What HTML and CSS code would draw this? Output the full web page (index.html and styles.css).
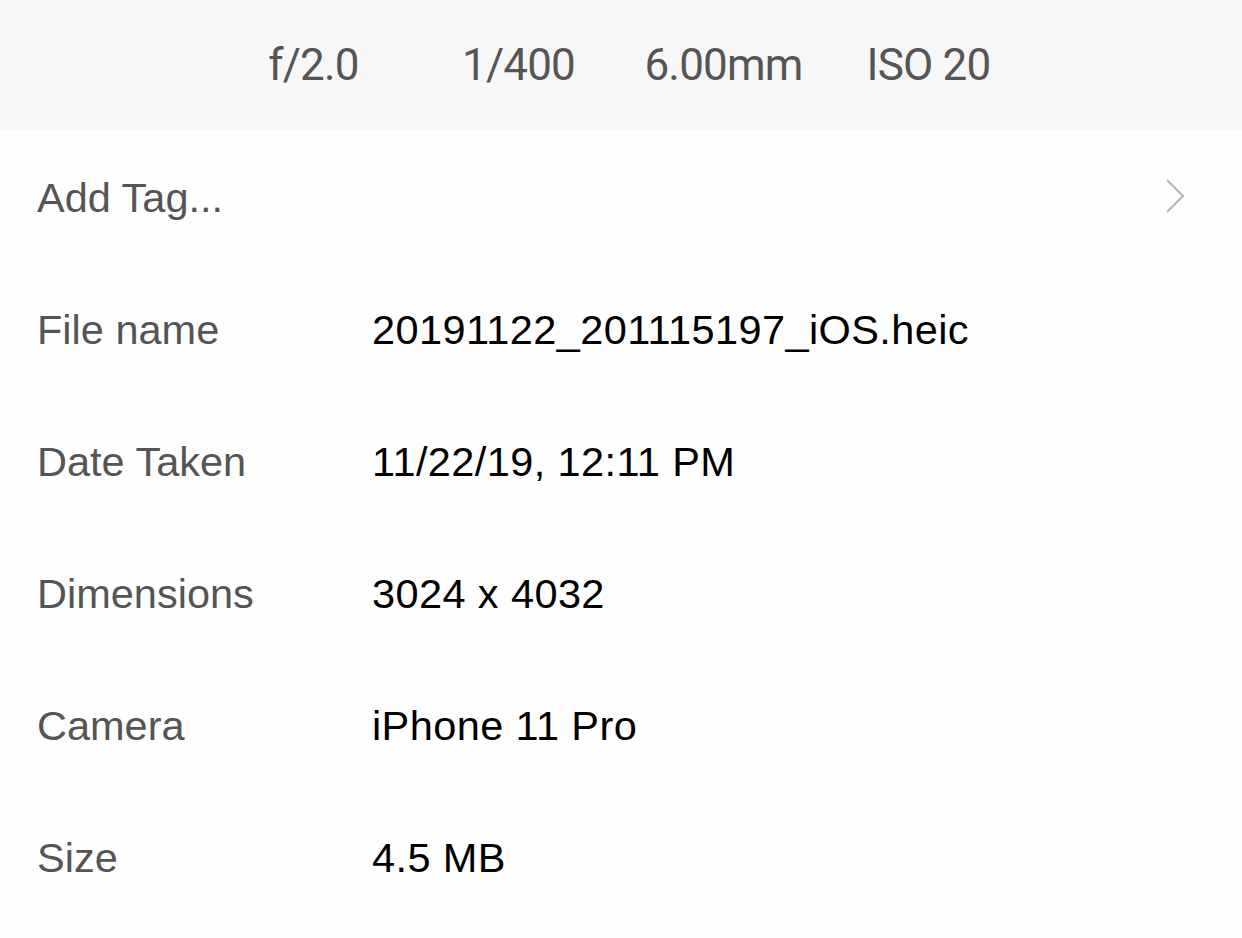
FILE: index.html
```html
<!DOCTYPE html>
<html>
<head>
<meta charset="utf-8">
<link rel="stylesheet" href="styles.css">
</head>
<body>
<div class="exif">
  <span class="exif-item">f/2.0</span>
  <span class="exif-item">1/400</span>
  <span class="exif-item">6.00mm</span>
  <span class="exif-item">ISO 20</span>
</div>
<div class="row tag-row">
  <span class="label">Add Tag...</span>
  <svg class="chevron" width="20" height="36" viewBox="0 0 20 36"><path d="M2 2 L18 18 L2 34" fill="none" stroke="#b9b9b9" stroke-width="2.2"/></svg>
</div>
<div class="row"><span class="label">File name</span><span class="value">20191122_201115197_iOS.heic</span></div>
<div class="row"><span class="label">Date Taken</span><span class="value">11/22/19, 12:11 PM</span></div>
<div class="row"><span class="label">Dimensions</span><span class="value">3024 x 4032</span></div>
<div class="row"><span class="label">Camera</span><span class="value">iPhone 11 Pro</span></div>
<div class="row"><span class="label">Size</span><span class="value">4.5 MB</span></div>
</body>
</html>
```

FILE: styles.css
```css
html, body {
  margin: 0;
  padding: 0;
  background: #fefefe;
}
body {
  width: 1242px;
  height: 938px;
  overflow: hidden;
  font-family: "Liberation Sans", Arial, sans-serif;
}
.exif {
  height: 130px;
  background: #f7f7f7;
  display: flex;
  justify-content: center;
  align-items: center;
}
.exif-item {
  width: 205px;
  text-align: center;
  font-family: Roboto, "Liberation Sans", sans-serif;
  font-size: 44px;
  color: #555555;
  letter-spacing: -0.8px;
}
.row {
  box-sizing: border-box;
  height: 132px;
  display: flex;
  align-items: center;
  padding: 4px 36px 0 37px;
  font-size: 41.5px;
}
.label {
  width: 335px;
  color: #555555;
  flex-shrink: 0;
}
.value {
  color: #000000;
  letter-spacing: 0.4px;
}
.tag-row {
  justify-content: space-between;
}
.tag-row .label {
  width: auto;
}
.chevron {
  display: block;
  margin-right: 21px;
  margin-top: -4px;
}
```
